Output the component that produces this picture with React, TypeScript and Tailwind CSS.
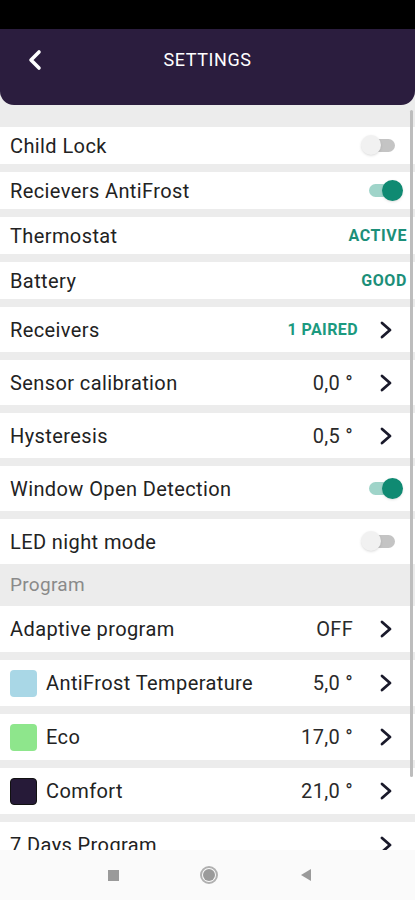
import type { ReactNode } from 'react';

type Right =
  | { kind: 'toggle'; on: boolean }
  | { kind: 'status'; text: string }
  | { kind: 'link'; value?: string; accent?: boolean };

interface SettingRow {
  label: string;
  right: Right;
  swatch?: string;
}

const topRows: SettingRow[] = [
  { label: 'Child Lock', right: { kind: 'toggle', on: false } },
  { label: 'Recievers AntiFrost', right: { kind: 'toggle', on: true } },
  { label: 'Thermostat', right: { kind: 'status', text: 'ACTIVE' } },
  { label: 'Battery', right: { kind: 'status', text: 'GOOD' } },
];

const midRows: SettingRow[] = [
  { label: 'Receivers', right: { kind: 'link', value: '1 PAIRED', accent: true } },
  { label: 'Sensor calibration', right: { kind: 'link', value: '0,0 °' } },
  { label: 'Hysteresis', right: { kind: 'link', value: '0,5 °' } },
  { label: 'Window Open Detection', right: { kind: 'toggle', on: true } },
  { label: 'LED night mode', right: { kind: 'toggle', on: false } },
];

const programRows: SettingRow[] = [
  { label: 'Adaptive program', right: { kind: 'link', value: 'OFF' } },
  { label: 'AntiFrost Temperature', swatch: 'bg-[#a9d7e6]', right: { kind: 'link', value: '5,0 °' } },
  { label: 'Eco', swatch: 'bg-[#8ee68c]', right: { kind: 'link', value: '17,0 °' } },
  { label: 'Comfort', swatch: 'bg-[#261a38] border border-[#111]', right: { kind: 'link', value: '21,0 °' } },
  { label: '7 Days Program', right: { kind: 'link' } },
];

function Chevron() {
  return (
    <svg width="14" height="20" viewBox="0 0 14 20">
      <polyline
        points="3,3 11,10 3,17"
        fill="none"
        stroke="#1a1a2b"
        strokeWidth="2.8"
        strokeLinecap="round"
        strokeLinejoin="round"
      />
    </svg>
  );
}

function Toggle({ on }: { on: boolean }) {
  if (on) {
    return (
      <div className="relative w-[34px] h-[21px] mr-[12px]">
        <div className="absolute left-0 right-[4px] top-[4px] h-[13px] rounded-full bg-[#9fd4c9]" />
        <div className="absolute right-0 top-0 w-[21px] h-[21px] rounded-full bg-[#0f8a72] shadow" />
      </div>
    );
  }
  return (
    <div className="relative w-[34px] h-[21px] mr-[20px]">
      <div className="absolute left-[4px] right-0 top-[4px] h-[13px] rounded-full bg-[#c4c4c4]" />
      <div className="absolute left-0 top-0 w-[20px] h-[20px] rounded-full bg-[#f1f1f1] shadow" />
    </div>
  );
}

function RightSide({ right }: { right: Right }) {
  if (right.kind === 'toggle') return <Toggle on={right.on} />;
  if (right.kind === 'status') {
    return (
      <span className="mr-[8px] text-[16px] font-bold text-[#1c8f79] tracking-[0.6px]">
        {right.text}
      </span>
    );
  }
  return (
    <div className="flex items-center mr-[22px]">
      {right.value && (
        <span
          className={
            right.accent
              ? 'text-[16px] font-bold text-[#1c9a80] tracking-[0.4px] mr-[21px]'
              : 'text-[20px] text-[#2a2a2a] tracking-[0.3px] mr-[26px]'
          }
        >
          {right.value}
        </span>
      )}
      <Chevron />
    </div>
  );
}

function Row({ row, height }: { row: SettingRow; height: string }): ReactNode {
  return (
    <div className={`flex items-center justify-between bg-white pl-[10px] ${height}`}>
      <div className="flex items-center">
        {row.swatch && <div className={`w-[27px] h-[27px] rounded-[4px] mr-[9px] ${row.swatch}`} />}
        <span className="text-[20px] tracking-[0.4px] text-[#222222]">{row.label}</span>
      </div>
      <RightSide right={row.right} />
    </div>
  );
}

export default function App() {
  return (
    <div
      className="relative w-[415px] h-[900px] flex flex-col bg-[#ececec] overflow-hidden"
      style={{ fontFamily: 'Roboto, "Liberation Sans", sans-serif' }}
    >
      <div className="h-[29px] bg-black shrink-0" />
      <header className="shrink-0 h-[76px] bg-[#2b1d3e] rounded-b-[14px] flex items-start pt-[17px] px-[26px]">
        <svg width="18" height="24" viewBox="0 0 18 24" className="mt-[2px]">
          <polyline
            points="13,4 5,12 13,20"
            fill="none"
            stroke="#ffffff"
            strokeWidth="3.6"
            strokeLinecap="round"
            strokeLinejoin="round"
          />
        </svg>
        <div className="flex-1 text-center text-white text-[18px] tracking-[0.6px] mr-[18px]">
          SETTINGS
        </div>
      </header>

      <main className="flex-1 overflow-hidden pt-[22px]">
        <div className="flex flex-col gap-[8px]">
          {topRows.map((r) => (
            <Row key={r.label} row={r} height="h-[37px]" />
          ))}
          {midRows.map((r) => (
            <Row key={r.label} row={r} height="h-[45px]" />
          ))}
        </div>
        <div className="h-[42px] flex items-center pl-[10px] text-[19px] tracking-[0.3px] text-[#8a8a8a]">
          Program
        </div>
        <div className="flex flex-col gap-[8px]">
          {programRows.map((r) => (
            <Row key={r.label} row={r} height="h-[46px]" />
          ))}
        </div>
      </main>

      <nav className="shrink-0 h-[50px] bg-[#fafafa] flex items-center">
        <div className="w-[11px] h-[11px] bg-[#9a9a9a] ml-[108px]" />
        <div className="w-[18px] h-[18px] rounded-full border-[2px] border-[#b0b0b0] flex items-center justify-center ml-[81px]">
          <div className="w-[12px] h-[12px] rounded-full bg-[#9a9a9a]" />
        </div>
        <svg width="12" height="14" viewBox="0 0 12 14" className="ml-[82px]">
          <polygon points="11,1 11,13 1,7" fill="#9a9a9a" />
        </svg>
      </nav>

      <div className="absolute right-[2px] top-[110px] w-[3px] h-[667px] bg-[#bdbdbd] rounded-full" />
    </div>
  );
}
